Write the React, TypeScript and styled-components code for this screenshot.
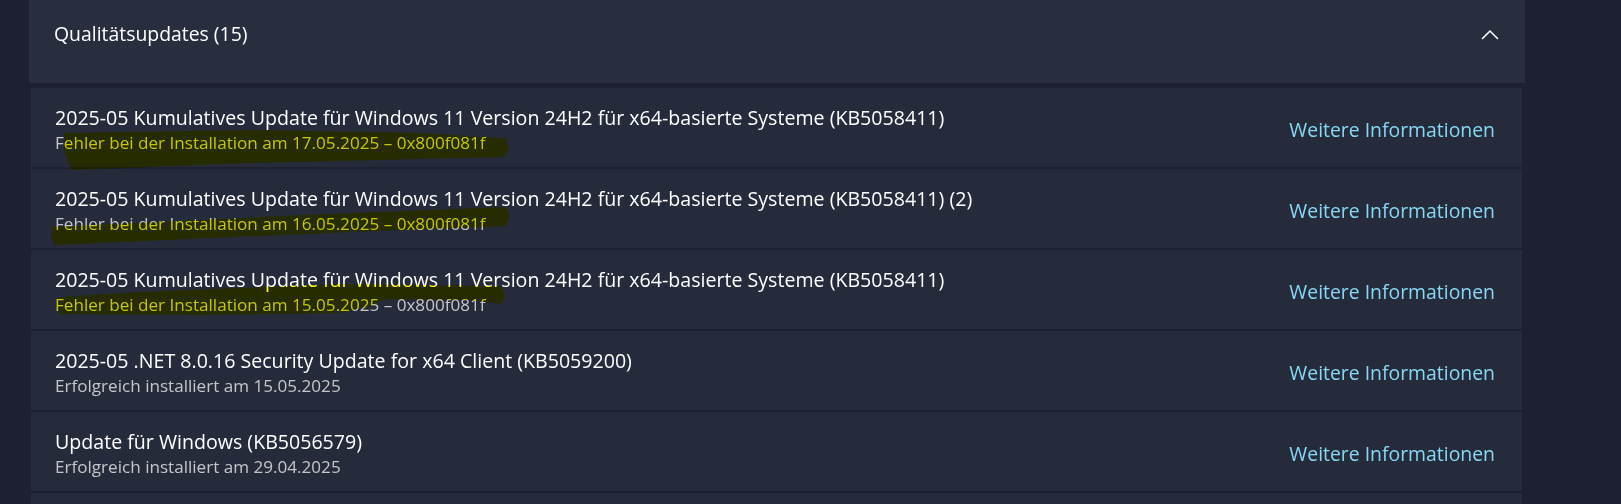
import { createGlobalStyle, styled } from 'styled-components';

interface Update {
  title: string;
  status: string;
}

const UPDATES: Update[] = [
  {
    title: '2025-05 Kumulatives Update für Windows 11 Version 24H2 für x64-basierte Systeme (KB5058411)',
    status: 'Fehler bei der Installation am 17.05.2025 – 0x800f081f',
  },
  {
    title: '2025-05 Kumulatives Update für Windows 11 Version 24H2 für x64-basierte Systeme (KB5058411) (2)',
    status: 'Fehler bei der Installation am 16.05.2025 – 0x800f081f',
  },
  {
    title: '2025-05 Kumulatives Update für Windows 11 Version 24H2 für x64-basierte Systeme (KB5058411)',
    status: 'Fehler bei der Installation am 15.05.2025 – 0x800f081f',
  },
  {
    title: '2025-05 .NET 8.0.16 Security Update for x64 Client (KB5059200)',
    status: 'Erfolgreich installiert am 15.05.2025',
  },
  {
    title: 'Update für Windows (KB5056579)',
    status: 'Erfolgreich installiert am 29.04.2025',
  },
];

// highlighter strokes drawn over the screenshot (page coordinates)
const MARKS = [
  '65,134 250,131 420,134 504,139 508,148 504,156 420,158 250,162 72,169 65,152',
  '53,228 280,217 505,208 509,216 505,225 280,234 55,244 52,236',
  '58,298 140,293 340,285 500,287 504,295 500,303 470,299 385,298 370,305 340,312 200,314 60,313 56,305',
];

const GlobalStyle = createGlobalStyle`
  html, body {
    margin: 0;
    background: #1c2031;
  }

  body {
    font-family: 'Open Sans', 'Noto Sans', sans-serif;
    overflow: hidden;
  }
`;

const ChevronUp = () => (
  <svg width="18" height="11" viewBox="0 0 18 11" fill="none">
    <path d="M1.5 9.5 L9 2 L16.5 9.5" stroke="#ffffff" strokeWidth="1.6" strokeLinecap="round" strokeLinejoin="round" />
  </svg>
);

const App = () => {
  return (
    <>
      <GlobalStyle />
      <S.Page>
        <S.Expander>
          <S.Header>
            <S.HeaderTitle>Qualitätsupdates (15)</S.HeaderTitle>
            <S.Toggle type="button" aria-label="Zuklappen">
              <ChevronUp />
            </S.Toggle>
          </S.Header>
          <S.List>
            {UPDATES.map((update, index) => (
              <S.Row key={index}>
                <S.Info>
                  <S.Title>{update.title}</S.Title>
                  <S.Status>{update.status}</S.Status>
                </S.Info>
                <S.Link href="#">Weitere Informationen</S.Link>
              </S.Row>
            ))}
            <S.Row />
          </S.List>
          <S.Marks width="1496" height="504" viewBox="0 0 1496 504">
            <g transform="translate(-29 0)">
              {MARKS.map((points) => (
                <polygon key={points} points={points} fill="#ffff00" stroke="#ffff00" strokeWidth="2" strokeLinejoin="round" />
              ))}
            </g>
          </S.Marks>
        </S.Expander>
      </S.Page>
    </>
  );
};

const S = {
  Page: styled.div`
    display: flex;
    height: 504px;
    padding-left: 29px;
    overflow: hidden;
  `,

  Expander: styled.section`
    position: relative;
    display: flex;
    flex-direction: column;
    gap: 5px;
    width: 1496px;
  `,

  Header: styled.div`
    display: flex;
    justify-content: space-between;
    align-items: flex-start;
    flex-shrink: 0;
    box-sizing: border-box;
    height: 83px;
    padding: 21px 25px 0 25px;
    background: #292e3f;
  `,

  HeaderTitle: styled.h2`
    margin: 0;
    font-size: 19.4px;
    font-weight: 400;
    line-height: 26px;
    color: #ffffff;
  `,

  Toggle: styled.button`
    display: flex;
    align-items: center;
    justify-content: center;
    width: 20px;
    height: 26px;
    padding: 0;
    border: none;
    background: none;
    cursor: pointer;
  `,

  List: styled.div`
    display: flex;
    flex-direction: column;
    gap: 2px;
    padding: 0 3px 0 2px;
  `,

  Row: styled.div`
    display: flex;
    justify-content: space-between;
    align-items: flex-start;
    flex-shrink: 0;
    box-sizing: border-box;
    height: 79px;
    padding: 17px 27px 0 24px;
    background: #262b3c;
  `,

  Info: styled.div`
    display: flex;
    flex-direction: column;
  `,

  Title: styled.span`
    font-size: 19.6px;
    line-height: 26px;
    color: #ffffff;
  `,

  Status: styled.span`
    font-size: 17.1px;
    line-height: 24px;
    color: #c6c6c8;
  `,

  Link: styled.a`
    margin-top: 12px;
    font-size: 19.4px;
    line-height: 26px;
    color: #86d8f4;
    text-decoration: none;
  `,

  Marks: styled.svg`
    position: absolute;
    top: 0;
    left: 0;
    pointer-events: none;
    mix-blend-mode: multiply;
  `,
};

export default App;
